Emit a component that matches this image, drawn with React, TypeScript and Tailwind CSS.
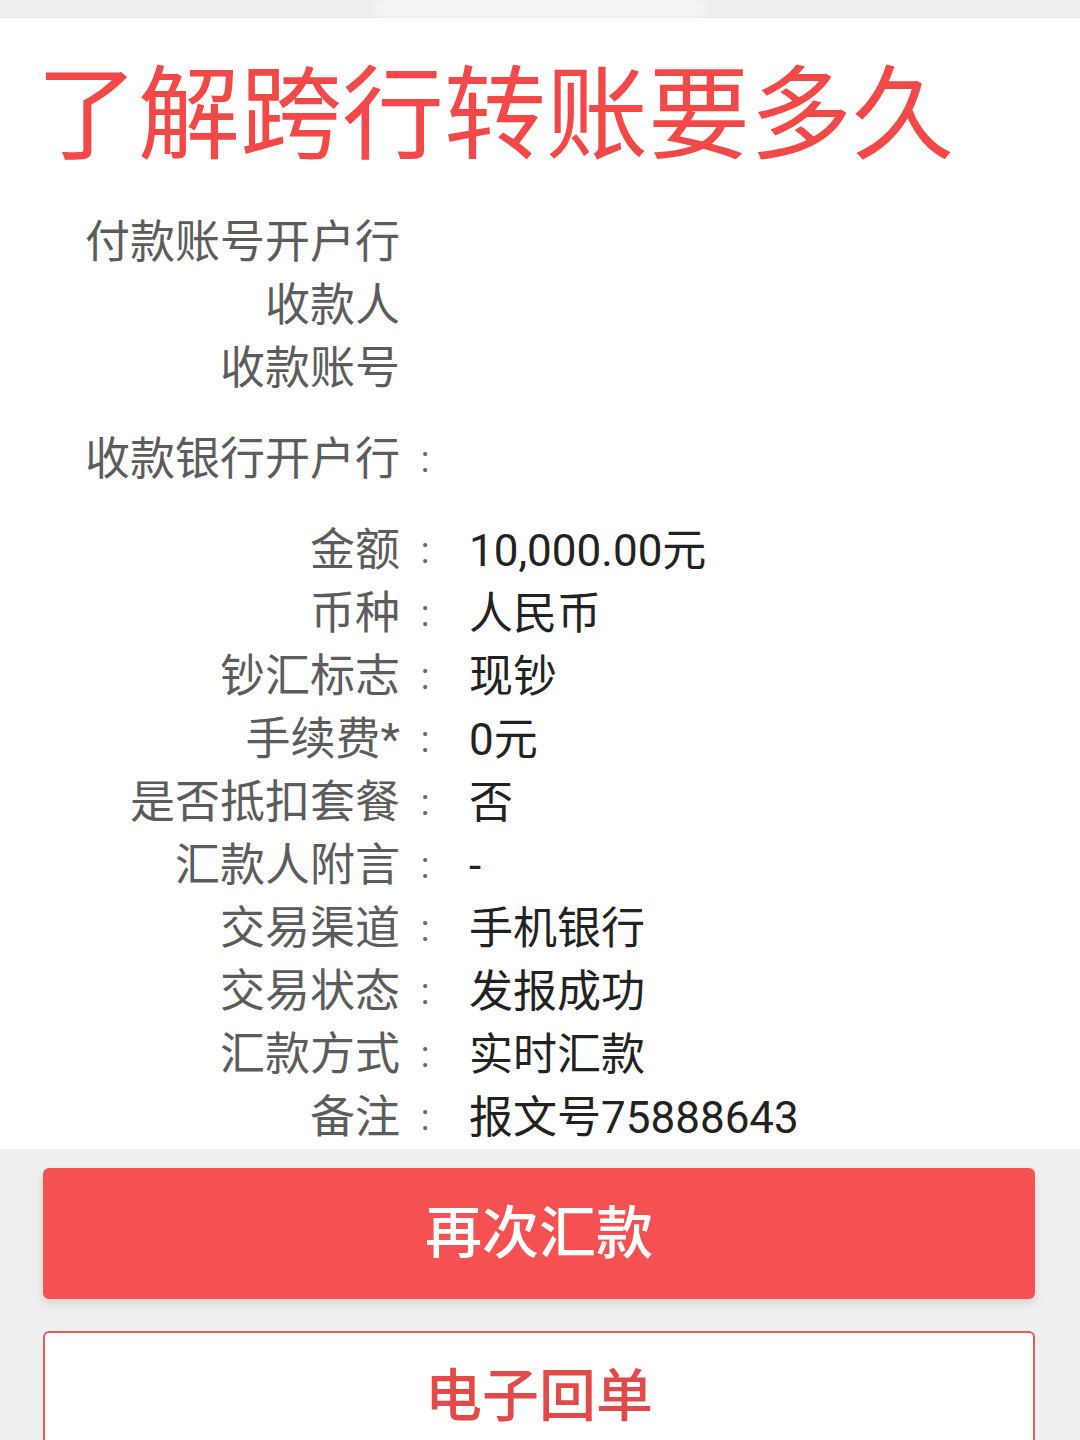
import React from 'react';

interface Row {
    label: string;
    value?: string;
    colon?: boolean;
    gapTop?: boolean;
}

const rows: Row[] = [
    { label: '付款账号开户行', colon: false },
    { label: '收款人', colon: false },
    { label: '收款账号', colon: false },
    { label: '收款银行开户行', gapTop: true },
    { label: '金额', value: '10,000.00元', gapTop: true },
    { label: '币种', value: '人民币' },
    { label: '钞汇标志', value: '现钞' },
    { label: '手续费*', value: '0元' },
    { label: '是否抵扣套餐', value: '否' },
    { label: '汇款人附言', value: '-' },
    { label: '交易渠道', value: '手机银行' },
    { label: '交易状态', value: '发报成功' },
    { label: '汇款方式', value: '实时汇款' },
    { label: '备注', value: '报文号75888643' },
];

const font = { fontFamily: 'Roboto, "Noto Sans CJK SC", sans-serif' };

export default function App() {
    return (
        <div className="w-[1080px] h-[1440px] overflow-hidden bg-[#efefef]" style={font}>
            {/* status strip */}
            <div className="h-[18px] bg-[#eeeeee] border-b border-[#e2e2e2] flex justify-center">
                <div className="w-[330px] h-full bg-[#f5f5f5] blur-[3px]" />
            </div>

            <div className="bg-white">
                <h1 className="pl-[36px] pt-[48px] text-[102px] leading-[100px] text-[#f24848] whitespace-nowrap">
                    了解跨行转账要多久
                </h1>

                <div className="pt-[45px]">
                    {rows.map((row, i) => (
                        <div
                            key={i}
                            className={`flex items-center h-[63px] leading-none ${row.gapTop ? 'mt-[28px]' : ''}`}
                        >
                            <div className="w-[400px] text-right text-[45px] text-[#5c5c5c] whitespace-nowrap">{row.label}</div>
                            <div className="w-[50px] text-center text-[#6a6a6a] text-[36px]">
                                {row.colon === false ? '' : ':'}
                            </div>
                            <div className="pl-[19px] text-[44px] text-[#222222] whitespace-nowrap">{row.value ?? ''}</div>
                        </div>
                    ))}
                </div>
            </div>

            <div className="px-[43px] pt-[19px] flex flex-col gap-[32px]">
                <button className="w-[992px] h-[131px] rounded-[6px] bg-[#f55152] text-white text-[57px] font-medium shadow-[0_4px_8px_rgba(0,0,0,0.12)] flex items-center justify-center">
                    再次汇款
                </button>
                <button className="w-[992px] h-[131px] rounded-[6px] bg-white border-2 border-[#e55a5a] text-[#e24a4a] text-[57px] font-medium flex items-center justify-center">
                    电子回单
                </button>
            </div>
        </div>
    );
}
